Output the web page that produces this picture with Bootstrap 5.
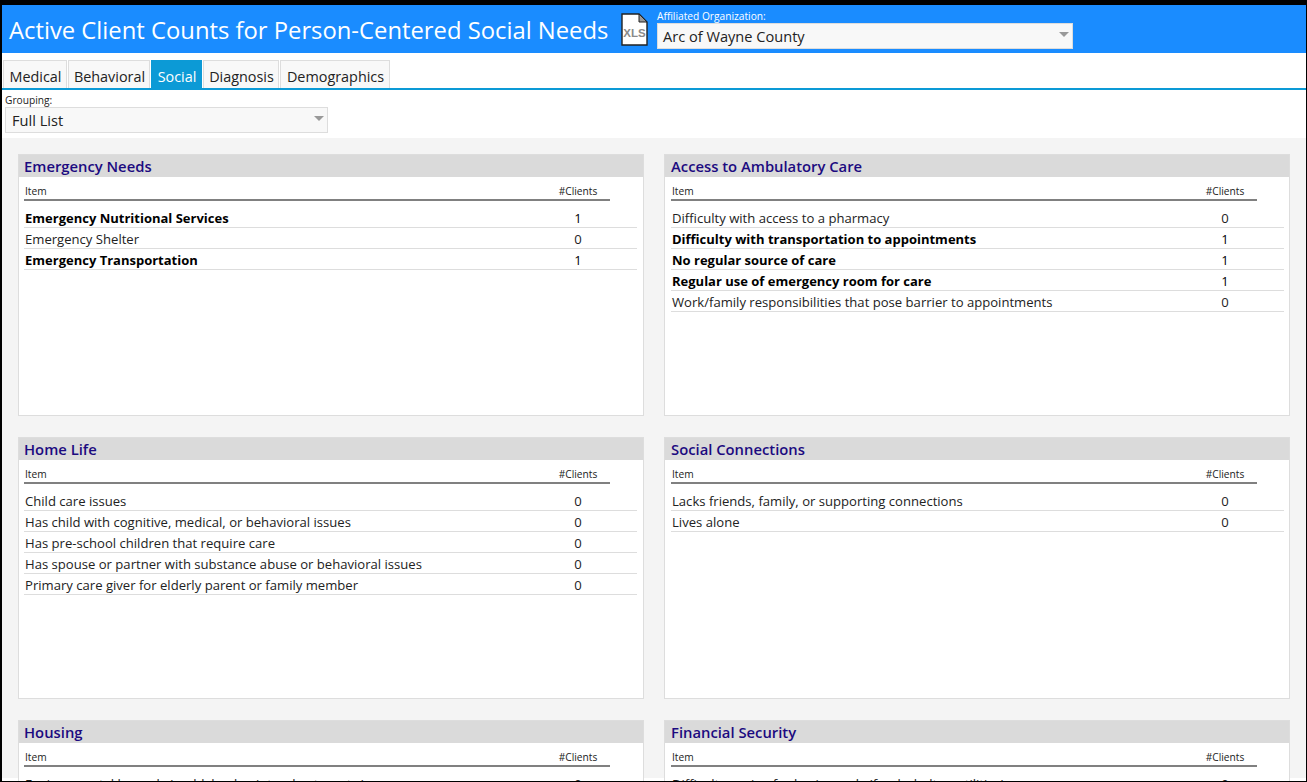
<!DOCTYPE html>
<html lang="en">
<head>
    <meta charset="UTF-8">
    <title>Active Client Counts</title>
    <link href="https://cdn.jsdelivr.net/npm/bootstrap@5.3.3/dist/css/bootstrap.min.css" rel="stylesheet">
    <style>
        html, body { height: 100%; overflow: hidden; }
        body { background: #000; font-family: "Open Sans", "Noto Sans", sans-serif; color: #222; }
        .app-frame { margin: 5px 1px 1px 2px; height: 776px; background: #fff; overflow: hidden; }

        .title-bar { height: 48px; background: #1a8cff; color: #fff; padding-left: 7px; }
        .title-text { font-size: 23.8px; line-height: 50px; margin: 0; font-weight: 400; width: 612px; white-space: nowrap; }
        .xls-icon { width: 27px; height: 33px; margin: 1px 9px 0 0; flex: none; }
        .org-box { width: 416px; }
        .org-label { font-size: 10.2px; line-height: 12px; margin-top: 5px; margin-bottom: 1px; }

        .pick-box { height: 26px; background: #f8f8f8; border: 1px solid #ddd; color: #222; font-size: 14.6px; line-height: 25px; padding-left: 5px; position: relative; }
        .pick-box::after { content: ""; position: absolute; right: 3px; top: 8px; border: 5px solid transparent; border-top: 5px solid #999; }

        .tab-strip { padding: 7px 0 0 1px; border-bottom: 2px solid #0c9ad6; height: 37px; flex-wrap: nowrap; gap: 1px; }
        .tab-strip .nav-link { height: 28px; padding: 0 0 0 1px; margin: 0; font-size: 14.4px; line-height: 31px; text-align: center; color: #222; background: #f8f8f8; border: 1px solid #ddd; border-bottom: 0; border-radius: 0; }
        .tab-strip .nav-link.active { background: #0c9ad6; border-color: #0c9ad6; color: #fff; }
        .tab-medical { width: 64px; }
        .tab-behavioral { width: 82px; }
        .tab-social { width: 51px; }
        .tab-diagnosis { width: 76px; }
        .tab-demographics { width: 110px; }

        .group-box { width: 323px; margin-left: 3px; height: 48px; }
        .group-label { font-size: 10.2px; line-height: 12px; padding-top: 4px; height: 17px; }
        .group-box .pick-box { padding-left: 6px; }

        .grey-area { background: #f4f4f4; padding: 16px 17px 0 16px; height: 640px; }
        .panel-grid { display: grid; grid-template-columns: 626px 626px; column-gap: 20px; row-gap: 21px; }
        .panel-box { height: 262px; background: #fff; border: 1px solid #ddd; border-radius: 0; overflow: hidden; }
        .panel-head { height: 23px; margin: -1px -1px 0; background: #dadada; color: #1c0a80; font-size: 14.8px; font-weight: 600; line-height: 25px; padding-left: 6px; }
        .panel-inner { padding: 0 6px 0 5px; }
        .panel-box:nth-child(even) .panel-head { padding-left: 7px; }
        .panel-box:nth-child(even) .panel-inner { padding-left: 6px; }
        .col-head { width: 586px; height: 24px; border-bottom: 2px solid #808080; font-size: 10.2px; line-height: 29px; padding-left: 1px; color: #222; }
        .col-head-num { width: 64px; text-align: center; }
        .data-list { margin-top: 6px; width: 613px; }
        .data-row { height: 21px; border-bottom: 1px solid #ddd; font-size: 13.1px; line-height: 23px; padding-left: 1px; color: #222; white-space: nowrap; }
        .data-row.on { font-weight: 700; font-size: 13px; color: #000; }
        .data-num { width: 120px; padding: 0 55px 0 57px; text-align: center; font-weight: 400; }
    </style>
</head>
<body>
<div class="app-frame">

    <!-- Title bar -->
    <div class="title-bar d-flex">
        <h1 class="title-text">Active Client Counts for Person-Centered Social Needs</h1>
        <svg class="xls-icon align-self-center" viewBox="0 0 27 33">
            <path d="M1 1H18L26 9V32H1Z" fill="#fff" stroke="#222" stroke-width="1.4"/>
            <path d="M18 1V9H26Z" fill="#999" stroke="#222" stroke-width="1"/>
            <text x="13.5" y="24" text-anchor="middle" font-family="Liberation Sans, sans-serif" font-size="11.5" font-weight="700" fill="#8a8a8a">XLS</text>
        </svg>
        <div class="org-box">
            <div class="org-label">Affiliated Organization:</div>
            <div class="pick-box">Arc of Wayne County</div>
        </div>
    </div>

    <!-- Tabs -->
    <ul class="nav tab-strip">
        <li class="nav-item"><a class="nav-link tab-medical" href="#">Medical</a></li>
        <li class="nav-item"><a class="nav-link tab-behavioral" href="#">Behavioral</a></li>
        <li class="nav-item"><a class="nav-link tab-social active" href="#">Social</a></li>
        <li class="nav-item"><a class="nav-link tab-diagnosis" href="#">Diagnosis</a></li>
        <li class="nav-item"><a class="nav-link tab-demographics" href="#">Demographics</a></li>
    </ul>

    <div class="group-box">
        <div class="group-label">Grouping:</div>
        <div class="pick-box">Full List</div>
    </div>

    <!-- Panels -->
    <div class="grey-area">
        <div id="panels" class="panel-grid"></div>
    </div>
</div>

<script>
    const panels = [
        { title: "Emergency Needs", rows: [["Emergency Nutritional Services", 1], ["Emergency Shelter", 0], ["Emergency Transportation", 1]] },
        { title: "Access to Ambulatory Care", rows: [["Difficulty with access to a pharmacy", 0], ["Difficulty with transportation to appointments", 1], ["No regular source of care", 1], ["Regular use of emergency room for care", 1], ["Work/family responsibilities that pose barrier to appointments", 0]] },
        { title: "Home Life", rows: [["Child care issues", 0], ["Has child with cognitive, medical, or behavioral issues", 0], ["Has pre-school children that require care", 0], ["Has spouse or partner with substance abuse or behavioral issues", 0], ["Primary care giver for elderly parent or family member", 0]] },
        { title: "Social Connections", rows: [["Lacks friends, family, or supporting connections", 0], ["Lives alone", 0]] },
        { title: "Housing", rows: [["Environmental hazards (mold, lead paint, asbestos, etc.)", 0]] },
        { title: "Financial Security", rows: [["Difficulty paying for basic needs (food, shelter, utilities)", 0]] }
    ];

    const grid = document.getElementById("panels");
    panels.forEach(p => {
        const rows = p.rows.map(r => `
            <div class="data-row d-flex justify-content-between ${r[1] ? "on" : ""}">
                <span>${r[0]}</span><span class="data-num">${r[1]}</span>
            </div>`).join("");
        grid.insertAdjacentHTML("beforeend", `
            <div class="card panel-box">
                <div class="panel-head">${p.title}</div>
                <div class="panel-inner">
                    <div class="col-head d-flex justify-content-between"><span>Item</span><span class="col-head-num">#Clients</span></div>
                    <div class="data-list">${rows}</div>
                </div>
            </div>`);
    });
</script>
<script src="https://cdn.jsdelivr.net/npm/bootstrap@5.3.3/dist/js/bootstrap.bundle.min.js"></script>
</body>
</html>
